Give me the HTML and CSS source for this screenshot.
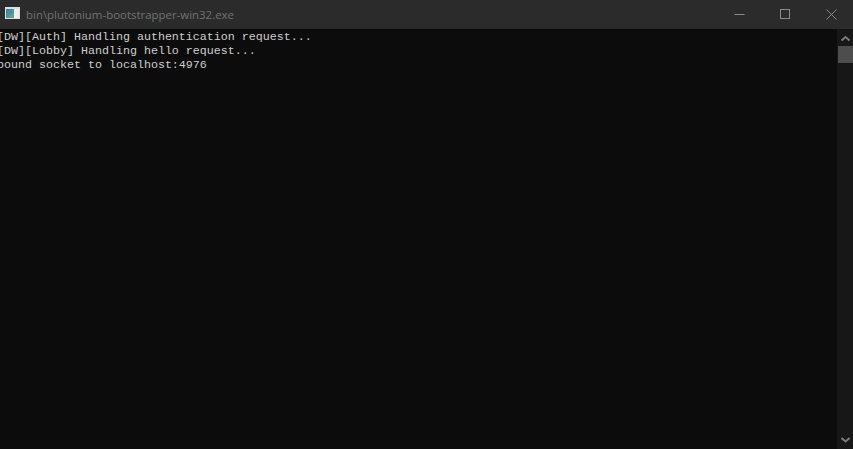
FILE: index.html
```html
<!DOCTYPE html>
<html lang="en">
<head>
<meta charset="utf-8">
<title>bin\plutonium-bootstrapper-win32.exe</title>
<link rel="stylesheet" href="styles.css">
</head>
<body>
<div class="window">
  <header class="titlebar">
    <svg class="app-icon" width="15" height="12" viewBox="0 0 15 12" aria-hidden="true">
      <defs>
        <linearGradient id="screen" x1="0" y1="0" x2="1" y2="1">
          <stop offset="0" stop-color="#3a7aa8"/>
          <stop offset="1" stop-color="#5fb08a"/>
        </linearGradient>
      </defs>
      <rect x="0" y="0" width="15" height="12" fill="#dedede"/>
      <rect x="1" y="2" width="8" height="9" fill="url(#screen)"/>
      <rect x="9" y="2" width="5" height="9" fill="#eeeeee"/>
    </svg>
    <span class="title">bin\plutonium-bootstrapper-win32.exe</span>
    <div class="controls">
      <button class="ctl"><svg width="11" height="11" viewBox="0 0 11 11"><path d="M0.5 5.5H10.5" stroke="#8a8a8a" fill="none"/></svg></button>
      <button class="ctl"><svg width="11" height="11" viewBox="0 0 11 11"><rect x="0.5" y="0.5" width="9" height="9" stroke="#8a8a8a" fill="none"/></svg></button>
      <button class="ctl"><svg width="11" height="11" viewBox="0 0 11 11"><path d="M0.5 0.5L10.5 10.5M10.5 0.5L0.5 10.5" stroke="#8a8a8a" fill="none"/></svg></button>
    </div>
  </header>
  <div class="body">
    <pre class="console">[DW][Auth] Handling authentication request...
[DW][Lobby] Handling hello request...
bound socket to localhost:4976</pre>
    <aside class="scrollbar">
      <svg class="arrow" width="9" height="7" viewBox="0 0 9 7"><path d="M0.5 5.5L4.5 2L8.5 5.5" stroke="#7a7a7a" stroke-width="2" fill="none"/></svg>
      <div class="thumb"></div>
      <div class="track"></div>
      <svg class="arrow" width="9" height="7" viewBox="0 0 9 7"><path d="M0.5 2L4.5 5.5L8.5 2" stroke="#7a7a7a" stroke-width="2" fill="none"/></svg>
    </aside>
  </div>
</div>
</body>
</html>
```
FILE: styles.css
```css
* { box-sizing: border-box; }
html, body { margin: 0; height: 100%; overflow: hidden; background: #0c0c0c; }
.window { width: 853px; height: 449px; display: flex; flex-direction: column; }
.titlebar {
  height: 29px; flex: none; display: flex; align-items: center;
  background: #2b2b2b; padding-left: 5px;
}
.app-icon { flex: none; margin-right: 6px; margin-top: -3px; }
.title {
  flex: 1; font: 11.45px "Open Sans", "Noto Sans", sans-serif; color: #727272; white-space: nowrap; margin-top: -1px;
}
.controls { display: flex; align-self: stretch; margin-right: -1px; }
.ctl {
  width: 46px; border: 0; padding: 0; background: none;
  display: flex; align-items: center; justify-content: center;
}
.body { flex: 1; display: flex; min-height: 0; }
.console {
  flex: 1; margin: 0 0 0 -3px; padding: 1px 0 0 0; color: #cccccc;
  font: 11.67px/14px "Liberation Mono", monospace; overflow: hidden;
}
.scrollbar {
  width: 16px; flex: none; display: flex; flex-direction: column; align-items: center;
  background: #171717; padding: 6px 0; padding-left: 1px;
}
.arrow { flex: none; }
.thumb { width: 15px; height: 17px; background: #4d4d4d; margin-top: 4px; }
.track { flex: 1; }
```
